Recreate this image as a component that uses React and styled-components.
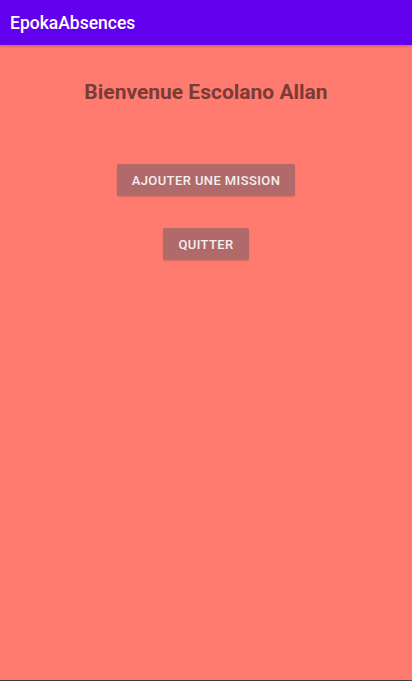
import React from "react";
import styled, { createGlobalStyle } from "styled-components";

const Global = createGlobalStyle`
  html, body {
    margin: 0;
    padding: 0;
    height: 100%;
    background: #ff7b6f;
    font-family: Roboto, "Liberation Sans", sans-serif;
  }
  #root {
    height: 100%;
  }
`;

const Screen = styled.div`
  height: 681px;
  display: flex;
  flex-direction: column;
  background: #ff7b6f;
  box-sizing: border-box;
  border-bottom: 1px solid #3c4043;
`;

const Toolbar = styled.div`
  height: 45px;
  background: #6200ee;
  display: flex;
  align-items: center;
  padding-left: 10px;
  box-shadow: 0 1px 3px rgba(0, 0, 0, 0.25);
  color: #fff;
  font-size: 17.5px;
  font-weight: 500;
  flex-shrink: 0;
`;

const Content = styled.div`
  display: flex;
  flex-direction: column;
  align-items: center;
  padding-top: 34px;
`;

const Title = styled.h1`
  margin: 0;
  font-size: 21px;
  font-weight: 700;
  color: #7a3b36;
  line-height: 26px;
`;

const Button = styled.button`
  border: none;
  border-radius: 2px;
  background: #b06a6a;
  color: #f7eded;
  font-family: Roboto, "Liberation Sans", sans-serif;
  font-size: 13px;
  font-weight: 500;
  letter-spacing: 0.4px;
  height: 32px;
  padding: 0 15px;
  margin-top: ${(p) => p.$top}px;
  box-shadow: 0 1px 2px rgba(0, 0, 0, 0.15);
`;

export default function App() {
  return (
    <>
      <Global />
      <Screen>
        <Toolbar>EpokaAbsences</Toolbar>
        <Content>
          <Title>Bienvenue Escolano Allan</Title>
          <Button $top={59}>AJOUTER UNE MISSION</Button>
          <Button $top={32}>QUITTER</Button>
        </Content>
      </Screen>
    </>
  );
}
